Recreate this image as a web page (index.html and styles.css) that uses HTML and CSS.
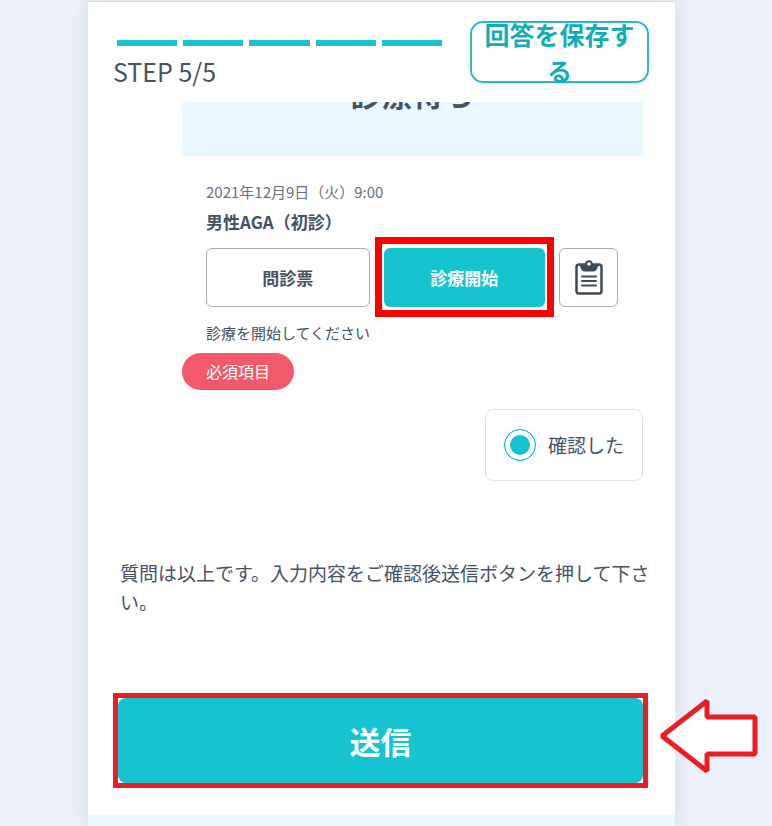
FILE: index.html
```html
<!DOCTYPE html>
<html lang="ja">
<head>
    <meta charset="UTF-8">
    <meta name="viewport" content="width=device-width, initial-scale=1.0">
    <title>問診票</title>
    <link rel="stylesheet" href="styles.css">
</head>
<body>
    <form class="panel">
        <!-- Header -->
        <header class="header">
            <div class="progress">
                <div class="bars">
                    <span></span><span></span><span></span><span></span><span></span>
                </div>
                <div class="step">STEP 5/5</div>
            </div>
            <button type="button" class="save-btn">回答を保存する</button>
        </header>

        <!-- Answer -->
        <main class="content">
            <section class="card">
                <h2 class="card-banner">診療待ち</h2>
                <div class="card-body">
                    <p class="date">2021年12月9日（火）9:00</p>
                    <h3 class="card-title">男性AGA（初診）</h3>
                    <div class="actions">
                        <button type="button" class="action">問診票</button>
                        <button type="button" class="action primary">診療開始</button>
                        <button type="button" class="action icon" aria-label="メモ">
                            <svg width="30" height="36" viewBox="0 0 30 36">
                                <rect x="2.5" y="4.5" width="25" height="29" rx="2.500" fill="#fff" stroke="#3d4b5c" stroke-width="2.500"/>
                                <path d="M5 4h20v1.500q-1 0-1.500 2q-1 4-4.500 4h-8q-3.500 0-4.500-4q-.5-2-1.500-2z" fill="#3d4b5c"/>
                                <circle cx="15" cy="4" r="2.800" fill="#fff" stroke="#3d4b5c" stroke-width="2"/>
                                <path d="M8 16.500h14M8 21h14M8 25.500h14" stroke="#3d4b5c" stroke-width="2" stroke-linecap="round"/>
                            </svg>
                        </button>
                    </div>
                    <p class="help">診療を開始してください</p>
                </div>
            </section>

            <span class="required">必須項目</span>

            <label class="choice">
                <input type="radio" name="confirm" checked>
                確認した
            </label>

            <p class="message">質問は以上です。入力内容をご確認後送信ボタンを押して下さい。</p>

            <div class="submit-box">
                <button type="submit" class="submit-btn">送信</button>
                <svg class="arrow" width="102" height="80" viewBox="0 0 102 80">
                    <path d="M5 40L50 5V21H98V58H50V75Z" fill="#fff" stroke="#ec1c24" stroke-width="5" stroke-linejoin="bevel"/>
                </svg>
            </div>
        </main>

        <footer class="footer"></footer>
    </form>
</body>
</html>
```

FILE: styles.css
```css
* {
    box-sizing: border-box;
}

body {
    margin: 0;
    padding: 1px 97px 0 88px;
    background-color: #ecf0fa;
    color: #465263;
    font-family: "Noto Sans CJK JP", sans-serif;
}

button {
    font-family: inherit;
    cursor: pointer;
}

h2, h3, p {
    margin: 0;
}

.panel {
    display: flex;
    flex-direction: column;
    min-height: calc(100vh - 1px);
    background-color: #fff;
    border-top: 1px solid #d9dbe0;
    box-shadow: 0 0 16px rgba(80, 90, 110, 0.14);
}

/* Header */
.header {
    position: relative;
    z-index: 1;
    display: flex;
    justify-content: space-between;
    height: 100px;
    padding: 19px 26px 0 25px;
    background-color: #fff;
}

.progress {
    flex: 1;
    padding-top: 19px;
}

.bars {
    display: flex;
    gap: 6px;
    margin: 0 28px 0 4px;
}

.bars span {
    flex: 1;
    height: 6px;
    background-color: #15c4d0;
}

.step {
    font-size: 25px;
    line-height: 50px;
}

.save-btn {
    display: flex;
    justify-content: center;
    align-items: center;
    width: 179px;
    height: 62px;
    padding: 0 12px;
    border: 2px solid #2bb8c3;
    border-radius: 13px;
    background-color: #fff;
    color: #12adb9;
    font-size: 25px;
    font-weight: bold;
    line-height: 36px;
}

.content {
    display: flex;
    flex-direction: column;
    margin-top: -28px;
    padding: 0 32px;
}

.card {
    margin-left: 62px;
}

.card-banner {
    height: 82px;
    background-color: #eaf8ff;
    font-size: 31px;
    line-height: 38px;
    text-align: center;
}

.card-body {
    padding: 24px 25px 8px 24px;
}

.date {
    color: #6a707a;
    font-size: 15px;
    line-height: 24px;
}

.card-title {
    font-size: 17px;
    line-height: 36px;
}

.actions {
    display: flex;
    gap: 14px;
    margin-top: 8px;
}

.action {
    flex: 1;
    height: 59px;
    padding: 0;
    border: 1px solid #a9abb8;
    border-radius: 6px;
    background-color: #fff;
    color: #465263;
    font-size: 17px;
    font-weight: bold;
}

.action.primary {
    position: relative;
    border: none;
    background-color: #15c4d0;
    color: #fff;
}

.action.primary::after {
    content: "";
    position: absolute;
    inset: -11px -9px -10px;
    border: 7px solid #f00;
}

.action.icon {
    display: flex;
    flex: 0 0 59px;
    justify-content: center;
    align-items: center;
}

.help {
    margin-top: 14px;
    font-size: 15px;
    line-height: 24px;
}

.required {
    align-self: flex-start;
    margin-left: 62px;
    padding: 0 24px;
    border-radius: 19px;
    background-color: #f25a6b;
    color: #fff;
    font-size: 16px;
    line-height: 37px;
}

.choice {
    display: flex;
    align-self: flex-end;
    align-items: center;
    gap: 12px;
    height: 72px;
    margin-top: 19px;
    padding: 0 18px;
    border: 1px solid #e0e0e9;
    border-radius: 8px;
    font-size: 19px;
    line-height: 24px;
}

.choice input {
    appearance: none;
    width: 32px;
    height: 32px;
    margin: 0;
    border: 1px solid #15b5c0;
    border-radius: 50%;
    background-color: #15c4d0;
    box-shadow: inset 0 0 0 5px #fff;
}

.message {
    margin: 77px -8px 0 0;
    font-size: 19px;
    line-height: 29px;
}

.submit-box {
    position: relative;
    margin: 77px -5px 27px -7px;
    border: 5px solid #ec1c24;
}

.submit-btn {
    display: block;
    width: 100%;
    height: 85px;
    border: none;
    border-radius: 8px;
    background-color: #15c4d0;
    color: #fff;
    font-size: 31px;
    font-weight: bold;
}

.arrow {
    position: absolute;
    top: -2px;
    left: 100%;
    margin-left: 14px;
}

.footer {
    flex: 1;
    background-color: #eaf8ff;
}
```
